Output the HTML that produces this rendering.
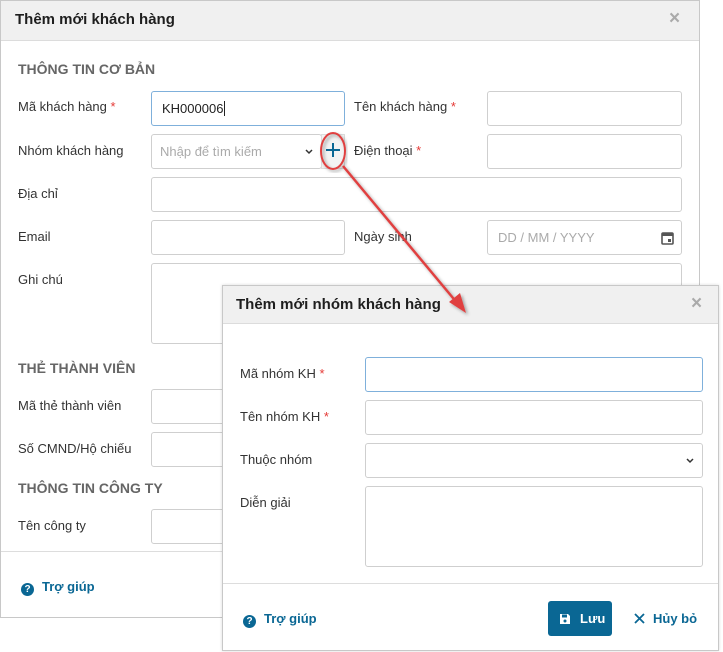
<!DOCTYPE html>
<html><head><meta charset="utf-8"><style>
*{box-sizing:border-box;margin:0;padding:0}
body{width:723px;height:652px;background:#fff;font-family:"Liberation Sans",Arial,sans-serif;position:relative;overflow:hidden;color:#222;font-size:13px}
.a{position:absolute}
.dlg{position:absolute;background:#fff}
.dlg::after{content:"";position:absolute;left:0;top:0;right:0;bottom:0;border:1px solid #c8c8c8;pointer-events:none}
.hdr{position:absolute;left:0;right:0;top:0;background:#f0f0f0;border-bottom:1px solid #dcdcdc}
.ttl{position:absolute;font-weight:bold;font-size:15px;color:#1e1e1e}
.x{position:absolute;color:#aaa;font-size:19px;font-weight:bold}
.lbl{position:absolute;font-size:13px;color:#333}
.req{color:#e53935}
.in{position:absolute;border:1px solid #cfcfcf;border-radius:3px;background:#fff;height:35px}
.sec{position:absolute;font-weight:bold;font-size:14px;color:#666}
.help{position:absolute;font-weight:bold;color:#0a6794;font-size:13px}
.q{display:inline-block;width:13px;height:13px;border-radius:50%;background:#0a6794;color:#fff;font-size:10px;text-align:center;line-height:13px;margin-right:8px;vertical-align:-1px}
.ph{color:#aaa}
</style></head><body>

<div class="dlg" style="left:0;top:0;width:700px;height:618px">
  <div class="hdr" style="height:41px"></div>
  <div class="ttl" style="left:15px;top:11px">Thêm mới khách hàng</div>
  <div class="x" style="left:669px;top:8px">×</div>
  <div class="sec" style="left:18px;top:61px">THÔNG TIN CƠ BẢN</div>

  <div class="lbl" style="left:18px;top:99px">Mã khách hàng <span class="req">*</span></div>
  <div class="in" style="left:151px;top:91px;width:194px;border-color:#7fb0db;padding:9px 10px">KH000006<span style="border-left:1px solid #222;margin-left:1px"></span></div>
  <div class="lbl" style="left:354px;top:99px">Tên khách hàng <span class="req">*</span></div>
  <div class="in" style="left:487px;top:91px;width:195px"></div>

  <div class="lbl" style="left:18px;top:143px">Nhóm khách hàng</div>
  <div class="in" style="left:151px;top:134px;width:171px;padding:9px 8px"><span class="ph">Nhập để tìm kiếm</span>
    <svg class="a" style="left:153px;top:14px" width="8" height="6" viewBox="0 0 8 6"><path d="M1 1L4 4L7 1" fill="none" stroke="#333" stroke-width="1.5"/></svg></div>
  <div class="a" style="left:321px;top:134px;width:24px;height:35px;background:#f3f3f3;border:1px solid #ddd"></div>
  <svg class="a" style="left:325px;top:142px" width="16" height="16" viewBox="0 0 16 16"><path d="M8 1V15M1 8H15" stroke="#0a6794" stroke-width="2"/></svg>
  <div class="lbl" style="left:354px;top:143px">Điện thoại <span class="req">*</span></div>
  <div class="in" style="left:487px;top:134px;width:195px"></div>

  <div class="lbl" style="left:18px;top:186px">Địa chỉ</div>
  <div class="in" style="left:151px;top:177px;width:531px"></div>

  <div class="lbl" style="left:18px;top:229px">Email</div>
  <div class="in" style="left:151px;top:220px;width:194px"></div>
  <div class="lbl" style="left:354px;top:229px">Ngày sinh</div>
  <div class="in" style="left:487px;top:220px;width:195px;padding:9px 10px"><span class="ph">DD / MM / YYYY</span>
    <svg class="a" style="left:173px;top:10px" width="13" height="14" viewBox="0 0 13 14"><rect x="1" y="2" width="11" height="11" rx="1" fill="none" stroke="#555" stroke-width="1.6"/><rect x="1" y="2" width="11" height="3" fill="#555"/><rect x="7" y="8" width="3" height="3" fill="#555"/></svg></div>

  <div class="lbl" style="left:18px;top:272px">Ghi chú</div>
  <div class="in" style="left:151px;top:263px;width:531px;height:81px"></div>

  <div class="sec" style="left:18px;top:360px">THẺ THÀNH VIÊN</div>
  <div class="lbl" style="left:18px;top:398px">Mã thẻ thành viên</div>
  <div class="in" style="left:151px;top:389px;width:194px"></div>
  <div class="lbl" style="left:18px;top:441px">Số CMND/Hộ chiếu</div>
  <div class="in" style="left:151px;top:432px;width:194px"></div>
  <div class="sec" style="left:18px;top:480px">THÔNG TIN CÔNG TY</div>
  <div class="lbl" style="left:18px;top:518px">Tên công ty</div>
  <div class="in" style="left:151px;top:509px;width:194px"></div>
  <div class="a" style="left:0;right:0;top:551px;border-top:1px solid #ddd"></div>
  <div class="help" style="left:21px;top:579px"><span class="q">?</span>Trợ giúp</div>
</div>

<div class="dlg" style="left:222px;top:285px;width:497px;height:366px;box-shadow:0 0 3px rgba(0,0,0,.15)">
  <div class="hdr" style="height:39px"></div>
  <div class="ttl" style="left:14px;top:11px">Thêm mới nhóm khách hàng</div>
  <div class="x" style="left:469px;top:8px">×</div>
  <div class="lbl" style="left:18px;top:81px">Mã nhóm KH <span class="req">*</span></div>
  <div class="in" style="left:143px;top:72px;width:338px;border-color:#7fb0db"></div>
  <div class="lbl" style="left:18px;top:124px">Tên nhóm KH <span class="req">*</span></div>
  <div class="in" style="left:143px;top:115px;width:338px"></div>
  <div class="lbl" style="left:18px;top:167px">Thuộc nhóm</div>
  <div class="in" style="left:143px;top:158px;width:338px">
    <svg class="a" style="left:320px;top:14px" width="8" height="6" viewBox="0 0 8 6"><path d="M1 1L4 4L7 1" fill="none" stroke="#333" stroke-width="1.5"/></svg></div>
  <div class="lbl" style="left:18px;top:210px">Diễn giải</div>
  <div class="in" style="left:143px;top:201px;width:338px;height:81px"></div>
  <div class="a" style="left:0;right:0;top:298px;border-top:1px solid #ddd"></div>
  <div class="help" style="left:21px;top:326px"><span class="q">?</span>Trợ giúp</div>
  <div class="a" style="left:326px;top:316px;width:64px;height:35px;background:#0a6794;border-radius:3px;color:#fff;font-weight:bold;padding:10px 0 0 11px">
    <svg style="vertical-align:-2px;margin-right:9px" width="12" height="12" viewBox="0 0 12 12"><path d="M1 1h8l2 2v8H1z" fill="#fff"/><rect x="3" y="1.5" width="5" height="3" fill="#0a6794"/><circle cx="6" cy="8" r="1.5" fill="#0a6794"/></svg>Lưu</div>
  <div class="a" style="left:412px;top:326px;color:#0a6794;font-weight:bold">
    <svg style="vertical-align:-1px;margin-right:8px" width="11" height="11" viewBox="0 0 11 11"><path d="M1 1L10 10M10 1L1 10" stroke="#0a6794" stroke-width="1.8"/></svg>Hủy bỏ</div>
</div>

<svg class="a" style="left:0;top:0" width="723" height="652">
  <defs><filter id="s"><feDropShadow dx="2" dy="2" stdDeviation="1.5" flood-opacity=".35"/></filter></defs>
  <ellipse cx="333" cy="151" rx="12" ry="18" fill="none" stroke="#e04040" stroke-width="2" filter="url(#s)"/>
  <g filter="url(#s)">
  <line x1="343" y1="166" x2="458" y2="304" stroke="#e04040" stroke-width="2.5"/>
  <polygon points="466,313 449,302 460,293" fill="#e04040"/>
  </g>
</svg>
</body></html>
